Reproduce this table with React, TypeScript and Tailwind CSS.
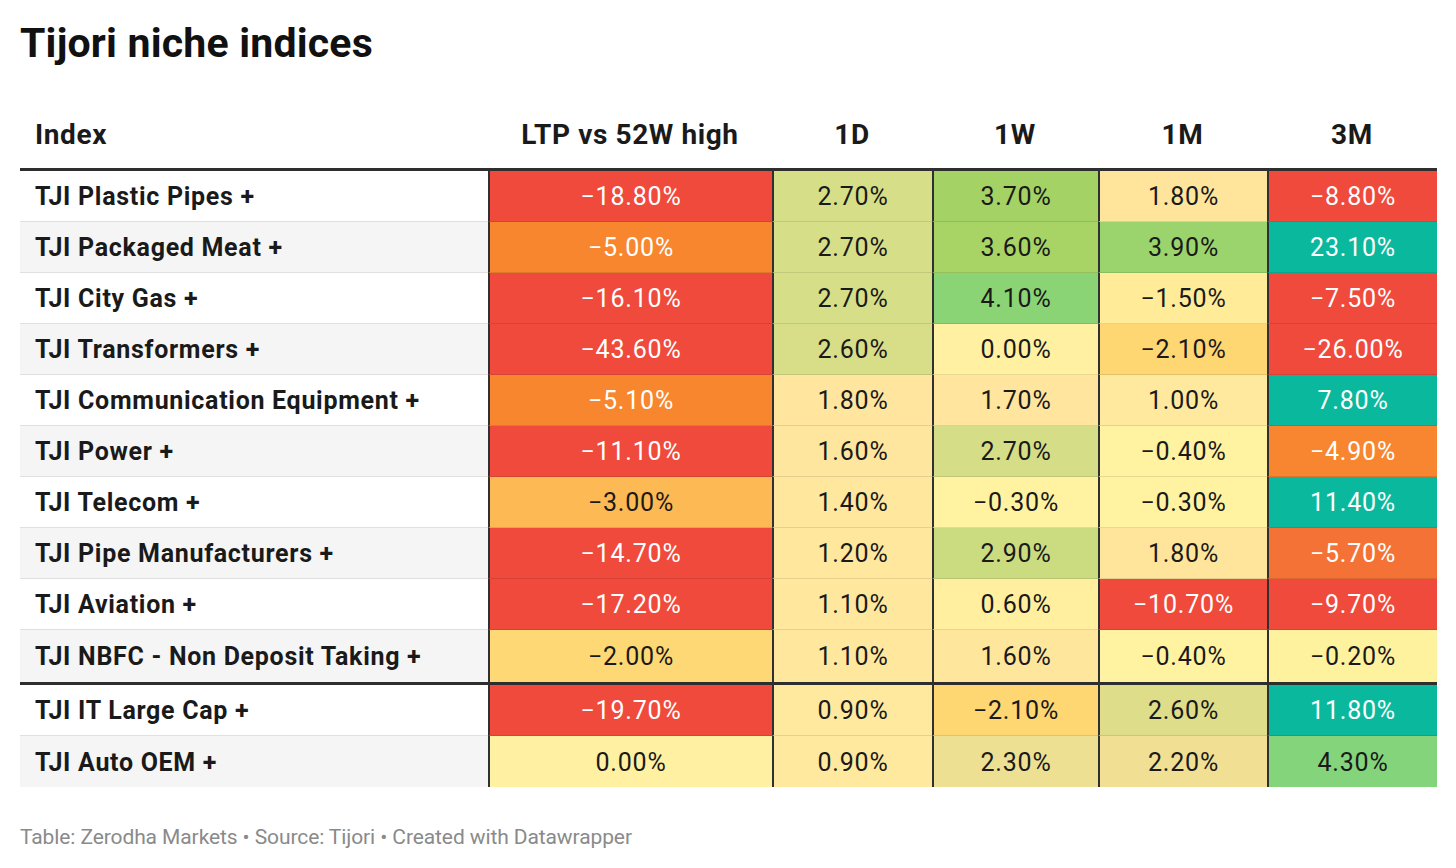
import React from "react"

type Cell = { v: string; bg: string; light?: boolean }
type Row = { name: string; cells: Cell[] }

const RED = "bg-[#ef4a3c]"
const TEAL = "bg-[#0ab99d]"
const ORANGE = "bg-[#f8862f]"

const rows: Row[] = [
  {
    name: "TJI Plastic Pipes +",
    cells: [
      { v: "−18.80%", bg: RED, light: true },
      { v: "2.70%", bg: "bg-[#d6df87]" },
      { v: "3.70%", bg: "bg-[#a4d264]" },
      { v: "1.80%", bg: "bg-[#ffe59b]" },
      { v: "−8.80%", bg: RED, light: true },
    ],
  },
  {
    name: "TJI Packaged Meat +",
    cells: [
      { v: "−5.00%", bg: ORANGE, light: true },
      { v: "2.70%", bg: "bg-[#d6df87]" },
      { v: "3.60%", bg: "bg-[#a8d466]" },
      { v: "3.90%", bg: "bg-[#9bd46c]" },
      { v: "23.10%", bg: TEAL, light: true },
    ],
  },
  {
    name: "TJI City Gas +",
    cells: [
      { v: "−16.10%", bg: RED, light: true },
      { v: "2.70%", bg: "bg-[#d6df87]" },
      { v: "4.10%", bg: "bg-[#8bd475]" },
      { v: "−1.50%", bg: "bg-[#ffeb98]" },
      { v: "−7.50%", bg: RED, light: true },
    ],
  },
  {
    name: "TJI Transformers +",
    cells: [
      { v: "−43.60%", bg: RED, light: true },
      { v: "2.60%", bg: "bg-[#d8dd88]" },
      { v: "0.00%", bg: "bg-[#fff1a1]" },
      { v: "−2.10%", bg: "bg-[#fed672]" },
      { v: "−26.00%", bg: RED, light: true },
    ],
  },
  {
    name: "TJI Communication Equipment +",
    cells: [
      { v: "−5.10%", bg: ORANGE, light: true },
      { v: "1.80%", bg: "bg-[#ffe59e]" },
      { v: "1.70%", bg: "bg-[#ffe59e]" },
      { v: "1.00%", bg: "bg-[#ffe99e]" },
      { v: "7.80%", bg: TEAL, light: true },
    ],
  },
  {
    name: "TJI Power +",
    cells: [
      { v: "−11.10%", bg: RED, light: true },
      { v: "1.60%", bg: "bg-[#ffe69e]" },
      { v: "2.70%", bg: "bg-[#d6dd87]" },
      { v: "−0.40%", bg: "bg-[#fff3a1]" },
      { v: "−4.90%", bg: "bg-[#f88530]", light: true },
    ],
  },
  {
    name: "TJI Telecom +",
    cells: [
      { v: "−3.00%", bg: "bg-[#fdb953]" },
      { v: "1.40%", bg: "bg-[#ffe79e]" },
      { v: "−0.30%", bg: "bg-[#fff3a2]" },
      { v: "−0.30%", bg: "bg-[#fff3a2]" },
      { v: "11.40%", bg: TEAL, light: true },
    ],
  },
  {
    name: "TJI Pipe Manufacturers +",
    cells: [
      { v: "−14.70%", bg: RED, light: true },
      { v: "1.20%", bg: "bg-[#ffe89e]" },
      { v: "2.90%", bg: "bg-[#cbdc80]" },
      { v: "1.80%", bg: "bg-[#ffe59b]" },
      { v: "−5.70%", bg: "bg-[#f47236]", light: true },
    ],
  },
  {
    name: "TJI Aviation +",
    cells: [
      { v: "−17.20%", bg: RED, light: true },
      { v: "1.10%", bg: "bg-[#ffe89e]" },
      { v: "0.60%", bg: "bg-[#ffef9f]" },
      { v: "−10.70%", bg: RED, light: true },
      { v: "−9.70%", bg: RED, light: true },
    ],
  },
  {
    name: "TJI NBFC - Non Deposit Taking +",
    cells: [
      { v: "−2.00%", bg: "bg-[#fed874]" },
      { v: "1.10%", bg: "bg-[#ffe89e]" },
      { v: "1.60%", bg: "bg-[#ffe69d]" },
      { v: "−0.40%", bg: "bg-[#fff3a1]" },
      { v: "−0.20%", bg: "bg-[#fff29f]" },
    ],
  },
  {
    name: "TJI IT Large Cap +",
    cells: [
      { v: "−19.70%", bg: RED, light: true },
      { v: "0.90%", bg: "bg-[#ffe99e]" },
      { v: "−2.10%", bg: "bg-[#fed672]" },
      { v: "2.60%", bg: "bg-[#dedd89]" },
      { v: "11.80%", bg: TEAL, light: true },
    ],
  },
  {
    name: "TJI Auto OEM +",
    cells: [
      { v: "0.00%", bg: "bg-[#fff1a1]" },
      { v: "0.90%", bg: "bg-[#ffe99e]" },
      { v: "2.30%", bg: "bg-[#ede093]" },
      { v: "2.20%", bg: "bg-[#f1df94]" },
      { v: "4.30%", bg: "bg-[#84d47c]" },
    ],
  },
]

const headers = ["LTP vs 52W high", "1D", "1W", "1M", "3M"]

const gridCols = "grid grid-cols-[468px_284px_160px_166px_169px_170px]"

export default function App() {
  return (
    <div className="min-h-screen bg-white pl-[20px] font-['Roboto',sans-serif] text-[#1a1a1a]">
      {/* title */}
      <h1 className="pt-[19px] text-[41px] font-bold leading-[48px] tracking-[0.2px] text-[#111]">
        Tijori niche indices
      </h1>

      <div className="w-[1417px]">
        {/* header */}
        <div className={`${gridCols} h-[104px] items-end border-b-[3px] border-[#2e2e2e] pb-[16px] text-[28px] font-bold leading-[34px] tracking-[0.6px]`}>
          <div className="pl-[15px]">Index</div>
          {headers.map((h) => (
            <div key={h} className="text-center">
              {h}
            </div>
          ))}
        </div>

        {/* rows */}
        {rows.map((row, i) => {
          const sep = i === 9
          const last = i === rows.length - 1
          return (
            <div
              key={row.name}
              className={`${gridCols} ${sep ? "h-[55px] border-b-[3px] border-[#2e2e2e]" : "h-[51px]"}`}
            >
              <div
                className={`flex items-center pl-[15px] pt-[2px] text-[25px] font-bold tracking-[0.7px] ${i % 2 === 1 ? "bg-[#f5f5f5]" : "bg-white"} ${sep || last ? "" : "border-b border-[#e0e0e0]"}`}
              >
                {row.name}
              </div>
              {row.cells.map((c, j) => (
                <div
                  key={j}
                  className={`flex items-center justify-center border-l-2 border-l-[#2e3033] pt-[2px] text-[25px] tracking-[0.8px] ${c.bg} ${c.light ? "text-white" : "text-[#1a1a1a]"} ${sep || last ? "" : "border-b border-b-black/10"}`}
                >
                  {c.v}
                </div>
              ))}
            </div>
          )
        })}
      </div>

      {/* footer */}
      <p className="mt-[38px] text-[21px] leading-[24px] tracking-[-0.1px] text-[#8a8a8a]">
        Table: Zerodha Markets • Source: Tijori • Created with Datawrapper
      </p>
    </div>
  )
}
